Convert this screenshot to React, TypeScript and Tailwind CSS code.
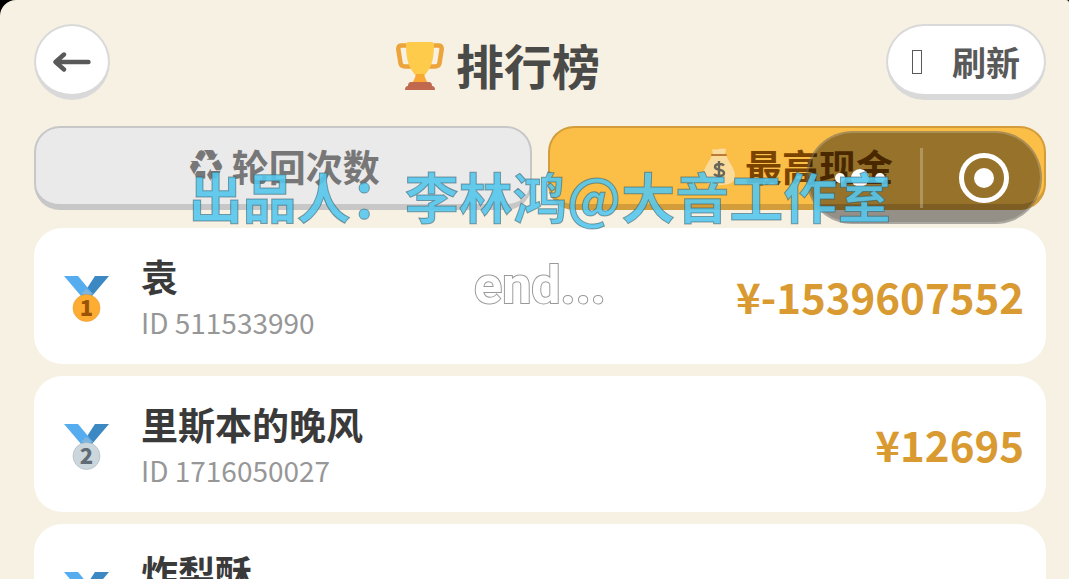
import React from 'react';

type Player = {
  rank: number;
  name: string;
  id: string;
  cash: string;
};

const players: Player[] = [
  { rank: 1, name: '袁', id: '511533990', cash: '¥-1539607552' },
  { rank: 2, name: '里斯本的晚风', id: '1716050027', cash: '¥12695' },
  { rank: 3, name: '炸梨酥', id: '1720443816', cash: '¥9820' },
];

const Trophy = () => (
  <svg className="mt-1 h-[50px] w-12 shrink-0" viewBox="0 0 48 50" aria-hidden="true">
    <path d="M14 4.500H5.500Q2.300 4.500 2.300 8L4.500 22Q5 25.500 9 25.500H16M34 4.500H42.500Q45.700 4.500 45.700 8L43.500 22Q43 25.500 39 25.500H32" fill="none" stroke="#eda53b" strokeWidth="4.600" />
    <path d="M10 3Q10 1 13 1H35Q38 1 38 3C38 20 35 27 28 35H20C13 27 10 20 10 3Z" fill="#fecb4a" />
    <path d="M20 33H28C29 37 30 39 32 42H16C18 39 19 37 20 33Z" fill="#f9a933" />
    <path d="M15 41H33Q36 41 36 45Q39 45 39 49H9Q9 45 12 45Q12 41 15 41Z" fill="#c1694f" />
  </svg>
);

const MoneyBag = () => (
  <svg className="h-[37px] w-9 shrink-0" viewBox="0 0 36 37" aria-hidden="true">
    <path d="M11 7H25C27 13 34 20 34 28C34 35 28 37 18 37S2 35 2 28C2 20 9 13 11 7Z" fill="#fbdb9b" />
    <path d="M11 1Q14 2 18 1T25 1L24 7H12Z" fill="#fbdb9b" />
    <path d="M11 7H25" stroke="#bd7a35" strokeWidth="2" strokeLinecap="round" />
    <path d="M23 17.500C21.500 15.500 14 15 14 19C14 23 23 20.500 23 25C23 29 15 28.500 13 26M18 13V30" fill="none" stroke="#68665b" strokeWidth="2.400" />
  </svg>
);

const medalColors: Record<number, { disc: string; edge: string; digit: string }> = {
  1: { disc: '#ffac33', edge: '#e89b2d', digit: '#9a5408' },
  2: { disc: '#ccd6dd', edge: '#aab5bc', digit: '#5f6c75' },
  3: { disc: '#d99063', edge: '#c17b4f', digit: '#7c3d1c' },
};

const Medal = ({ rank }: { rank: number }) => {
  const c = medalColors[rank];
  return (
    <svg className="mt-1.5 h-[46px] w-[45px] shrink-0" viewBox="0 0 45 46" role="img" aria-label={`第${rank}名`}>
      <path d="M31 0H45L28 20H18Z" fill="#3b88c3" />
      <path d="M0 0H14L29 18L22 22L17 20Z" fill="#55acee" />
      <path d="M17 18L22 13L29 18Z" fill="#7fb4dc" />
      <circle cx="22.500" cy="32" r="13.500" fill={c.disc} stroke={c.edge} strokeWidth=".6" />
      <text x="22.500" y="40" textAnchor="middle" fontSize="22" fontWeight="900" fontFamily="Noto Sans CJK SC, sans-serif" fill={c.digit}>
        {rank}
      </text>
    </svg>
  );
};

const Header = () => (
  <header className="flex items-center justify-between">
    <button aria-label="返回" className="flex h-[76px] w-[76px] items-center justify-center rounded-full border-2 border-b-[6px] border-[#d9d9d9] bg-white pt-1">
      <svg className="h-5 w-[38px]" viewBox="0 0 38 20" fill="none" stroke="#595959" strokeWidth="4.400" strokeLinecap="round" strokeLinejoin="round">
        <path d="M35.500 10H3M11 2.500L2.500 10L11 17.500" />
      </svg>
    </button>
    <h1 className="flex items-center gap-3 pt-1 text-[48px] leading-[56px] font-bold text-[#4a4a48]">
      <Trophy />
      排行榜
    </h1>
    <button className="flex h-[76px] w-40 items-center justify-between rounded-full border-2 border-b-[6px] border-[#d9d9d9] bg-white px-6 pt-1 text-[34px] leading-10 font-bold text-[#595959]">
      <span className="h-6 w-2.5 border border-[#595959]" />
      刷新
    </button>
  </header>
);

const Tabs = () => (
  <nav className="mt-[26px] grid grid-cols-2 gap-4 text-[37px] leading-[44px] font-bold">
    <button className="flex h-[84px] items-center justify-center gap-1.5 rounded-[26px] border-2 border-b-[6px] border-[#c7c7c7] bg-[#eaeaea] text-[#777777]">
      <span className="font-['DejaVu_Sans'] text-[44px] font-normal">♻</span>
      轮回次数
    </button>
    <button className="flex h-[84px] items-center justify-center gap-2 rounded-[26px] border-2 border-b-[6px] border-[#d29d3a] bg-[#fbbe47] text-[#7a4300]">
      <MoneyBag />
      最高现金
    </button>
  </nav>
);

const PlayerRow = ({ player }: { player: Player }) => (
  <li className="flex h-[136px] shrink-0 items-center rounded-[28px] bg-white pr-[22px] pl-[30px]">
    <Medal rank={player.rank} />
    <div className="ml-8 grow pt-1">
      <div className="text-[37px] leading-[48px] font-bold text-[#3a3a3a]">{player.name}</div>
      <div className="text-[28px] leading-[44px] text-[#979797]">ID {player.id}</div>
    </div>
    <div className="text-[42px] leading-[56px] font-bold text-[#d89a31]">{player.cash}</div>
  </li>
);

const Capsule = () => (
  <div className="absolute top-[131px] right-[27px] flex h-[93px] w-[236px] items-center rounded-full border-2 border-white/20 bg-black/40">
    <button aria-label="更多" className="flex flex-1 items-center justify-center gap-1.5 pr-2">
      <span className="size-2.5 rounded-full bg-white" />
      <span className="size-[18px] rounded-full bg-white" />
      <span className="size-2.5 rounded-full bg-white" />
    </button>
    <span className="h-[60px] w-[3px] bg-white/25" />
    <button aria-label="关闭" className="flex w-[117px] items-center justify-center pl-1">
      <span className="flex size-[50px] items-center justify-center rounded-full border-[5px] border-white">
        <span className="size-5 rounded-full bg-white" />
      </span>
    </button>
  </div>
);

const Credits = () => (
  <div className="pointer-events-none absolute inset-x-0 top-[156px] pr-[23px] pl-[34px] text-center text-[54px] leading-[80px] whitespace-nowrap">
    <p className="font-bold text-[#55c6ec]/90 [-webkit-text-stroke:1px_rgba(50,80,90,0.5)]">出品人：李林鸿@大音工作室</p>
    <p className="mt-2.5 font-['Roboto'] text-[52px] font-bold text-white [paint-order:stroke_fill] [-webkit-text-stroke:2px_#999999]">end...</p>
  </div>
);

const App = () => {
  return (
    <div className="h-screen bg-black font-['Noto_Sans_CJK_SC',sans-serif]">
      <div className="relative h-full overflow-hidden rounded-tl-[16px] rounded-tr-[3px] bg-[#f7f1e3] pt-6 pr-[23px] pl-[34px]">
        <Header />
        <Tabs />
        <ul className="mt-[18px] flex flex-col gap-3">
          {players.map((player) => (
            <PlayerRow key={player.id} player={player} />
          ))}
        </ul>
        <Capsule />
        <Credits />
      </div>
    </div>
  );
};

export default App;
